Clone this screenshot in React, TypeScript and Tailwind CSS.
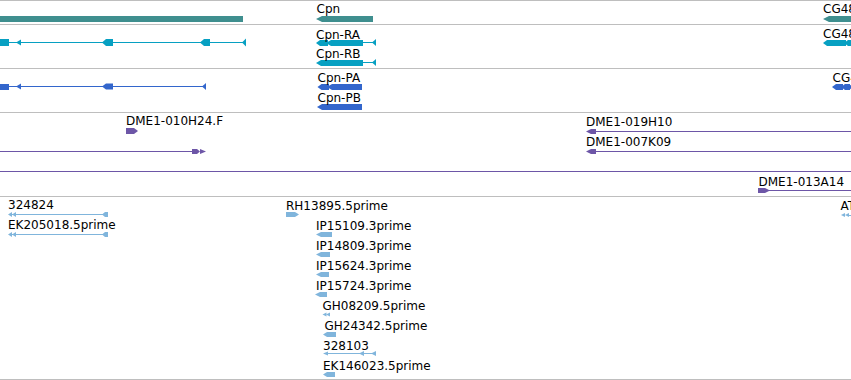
import React from 'react';

// genome browser panel: five tracks, glyphs drawn in page coordinates
type Label = [string, number, number]; // text, x, cap-top (page y)

const pts = (a: number[][]) => a.map((p) => p.join(',')).join(' ');

// bar with a pointed left end (minus strand)
const lBar = (x1: number, x2: number, cy: number, h: number, tip = 4) =>
  pts([[x1, cy], [x1 + tip, cy - h / 2], [x2, cy - h / 2], [x2, cy + h / 2], [x1 + tip, cy + h / 2]]);
// bar with a pointed right end (plus strand)
const rBar = (x1: number, x2: number, cy: number, h: number, tip = 4) =>
  pts([[x1, cy - h / 2], [x2 - tip, cy - h / 2], [x2, cy], [x2 - tip, cy + h / 2], [x1, cy + h / 2]]);
const lTri = (x: number, cy: number, w: number, h: number) =>
  pts([[x, cy], [x + w, cy - h / 2], [x + w, cy + h / 2]]);
const rTri = (x: number, cy: number, w: number, h: number) =>
  pts([[x, cy - h / 2], [x + w, cy], [x, cy + h / 2]]);

function Ln({ x1, x2, y }: { x1: number; x2: number; y: number }) {
  return <rect x={x1} y={y} width={x2 - x1} height={1} />;
}

function Track({
  top,
  height,
  color,
  labels,
  className,
  children,
}: {
  top: number;
  height: number;
  color: string;
  labels: Label[];
  className: string;
  children: React.ReactNode;
}) {
  return (
    <div className={`relative border-b border-[#bebebe] ${className}`}>
      <svg
        className="absolute left-0 top-0"
        width={851}
        height={height}
        viewBox={`0 ${top} 851 ${height}`}
        fill={color}
        shapeRendering="geometricPrecision"
      >
        {children}
      </svg>
      {labels.map(([t, x, y]) => (
        <span key={t + x} className="absolute whitespace-nowrap" style={{ left: x, top: y - top - 1.5 }}>
          {t}
        </span>
      ))}
    </div>
  );
}

export default function App() {
  return (
    <div className="w-[851px] h-[380px] overflow-hidden bg-white border-t border-[#bebebe] font-['DejaVu_Sans',sans-serif] text-[12px] leading-[12px] text-black">
      {/* genes */}
      <Track
        top={1}
        height={23}
        color="#3f8f8f"
        className="h-[24px]"
        labels={[
          ['Cpn', 316.5, 4.5],
          ['CG4851', 823, 4.5],
        ]}
      >
        <rect x={0} y={16} width={243} height={6} />
        <polygon points={lBar(316, 373, 19, 6, 6)} />
        <polygon points={lBar(823, 853, 19, 6, 6)} />
      </Track>

      {/* transcripts */}
      <Track
        top={25}
        height={43}
        color="#07a0c2"
        className="h-[44px]"
        labels={[
          ['Cpn-RA', 316, 30],
          ['Cpn-RB', 316, 49.5],
          ['CG4851-RA', 823, 29.5],
        ]}
      >
        <Ln x1={8} x2={246} y={42} />
        <rect x={0} y={39} width={9} height={7} />
        <polygon points={lTri(16, 42.5, 5, 6)} />
        <polygon points={lBar(102, 113, 42.5, 7, 4)} />
        <polygon points={lBar(200, 210, 42.5, 7, 4)} />
        <polygon points={lTri(242, 42.5, 4, 8)} />

        <polygon points={lBar(316, 328, 43, 6, 4)} />
        <polygon points={lBar(326, 363, 43, 6, 5)} />
        <Ln x1={362} x2={376} y={42} />
        <polygon points={lTri(372, 42.5, 4, 7)} />

        <polygon points={lBar(316, 363, 63, 6, 5)} />
        <Ln x1={362} x2={376} y={62} />
        <polygon points={lTri(372, 62.5, 4, 7)} />

        <polygon points={lBar(823, 846, 43, 6, 4)} />
        <polygon points={lBar(844, 853, 43, 6, 4)} />
      </Track>

      {/* proteins */}
      <Track
        top={69}
        height={43}
        color="#3366cc"
        className="h-[44px]"
        labels={[
          ['Cpn-PA', 317.5, 73],
          ['Cpn-PB', 317.5, 93],
          ['CG4851-PA', 832.5, 73],
        ]}
      >
        <Ln x1={8} x2={206} y={86} />
        <rect x={0} y={84} width={9} height={6} />
        <polygon points={lTri(16, 86.5, 5, 6)} />
        <polygon points={lBar(102, 113, 86.5, 6, 4)} />
        <polygon points={lTri(202, 86.5, 4, 7)} />

        <polygon points={lBar(317.5, 329, 87, 6, 4)} />
        <polygon points={lBar(327, 362, 87, 6, 5)} />
        <polygon points={lBar(317, 362, 107, 6, 5)} />

        <polygon points={lBar(832, 843, 87, 6, 4)} />
        <polygon points={lBar(841, 850, 87, 6, 4)} />
        <polygon points={lBar(848, 853, 87, 6, 4)} />
      </Track>

      {/* BAC clones */}
      <Track
        top={113}
        height={83}
        color="#6d56a7"
        className="h-[84px]"
        labels={[
          ['DME1-010H24.F', 126, 116],
          ['DME1-019H10', 586, 117.5],
          ['DME1-007K09', 586, 137.5],
          ['DME1-013A14', 758.5, 177],
        ]}
      >
        <polygon points={rBar(126, 138, 131, 6, 4)} />

        <Ln x1={0} x2={196} y={151} />
        <polygon points={rBar(192, 200, 151.5, 5, 3)} />
        <polygon points={rTri(200, 151.5, 6, 5)} />

        <polygon points={lBar(586, 596, 131.5, 5, 5)} />
        <Ln x1={594} x2={851} y={131} />

        <polygon points={lBar(586, 596, 151.5, 5, 5)} />
        <Ln x1={594} x2={851} y={151} />

        <Ln x1={0} x2={851} y={171} />

        <polygon points={rBar(758, 770, 190.5, 5, 5)} />
        <Ln x1={768} x2={851} y={190} />
      </Track>

      {/* ESTs */}
      <Track
        top={197}
        height={182}
        color="#80b5dc"
        className="h-[183px]"
        labels={[
          ['324824', 8, 200],
          ['EK205018.5prime', 8, 220],
          ['RH13895.5prime', 286, 201],
          ['IP15109.3prime', 316, 221],
          ['IP14809.3prime', 316, 241],
          ['IP15624.3prime', 316, 261],
          ['IP15724.3prime', 316, 281],
          ['GH08209.5prime', 322.5, 301.5],
          ['GH24342.5prime', 324.5, 321.5],
          ['328103', 323, 341.5],
          ['EK146023.5prime', 323, 361.5],
          ['AT19283.5prime', 840.5, 201.5],
        ]}
      >
        <Ln x1={12} x2={108} y={214} />
        <polygon points={lTri(8, 214.5, 4, 5)} />
        <polygon points={lTri(12, 214.5, 4, 5)} />
        <polygon points={lBar(102, 108, 214.5, 5, 3)} />

        <Ln x1={12} x2={108} y={234} />
        <polygon points={lTri(8, 234.5, 4, 5)} />
        <polygon points={lTri(12, 234.5, 4, 5)} />
        <polygon points={lBar(102, 108, 234.5, 5, 3)} />

        <polygon points={rBar(286, 299, 214.5, 5, 4)} />

        <polygon points={lBar(316, 332, 234.5, 5, 5)} />
        <polygon points={lBar(316, 330, 254.5, 5, 5)} />
        <polygon points={lBar(316, 329, 274.5, 5, 5)} />
        <polygon points={lBar(315, 327, 294.5, 5, 5)} />

        <polygon points={lTri(322.5, 314.5, 4, 4)} />
        <polygon points={lTri(326, 314.5, 4, 4)} />

        <polygon points={lBar(323, 336, 334.5, 5, 4)} />

        <Ln x1={324} x2={376} y={353} />
        <polygon points={lTri(323, 353.5, 5, 4)} />
        <polygon points={lTri(359, 353.5, 5, 5)} />
        <polygon points={lTri(371, 353.5, 5, 5)} />

        <polygon points={lBar(323, 335, 374.5, 5, 4)} />

        <polygon points={lTri(841, 215, 4, 4)} />
        <polygon points={lTri(845, 215, 4, 4)} />
        <Ln x1={848} x2={851} y={215} />
      </Track>
    </div>
  );
}
